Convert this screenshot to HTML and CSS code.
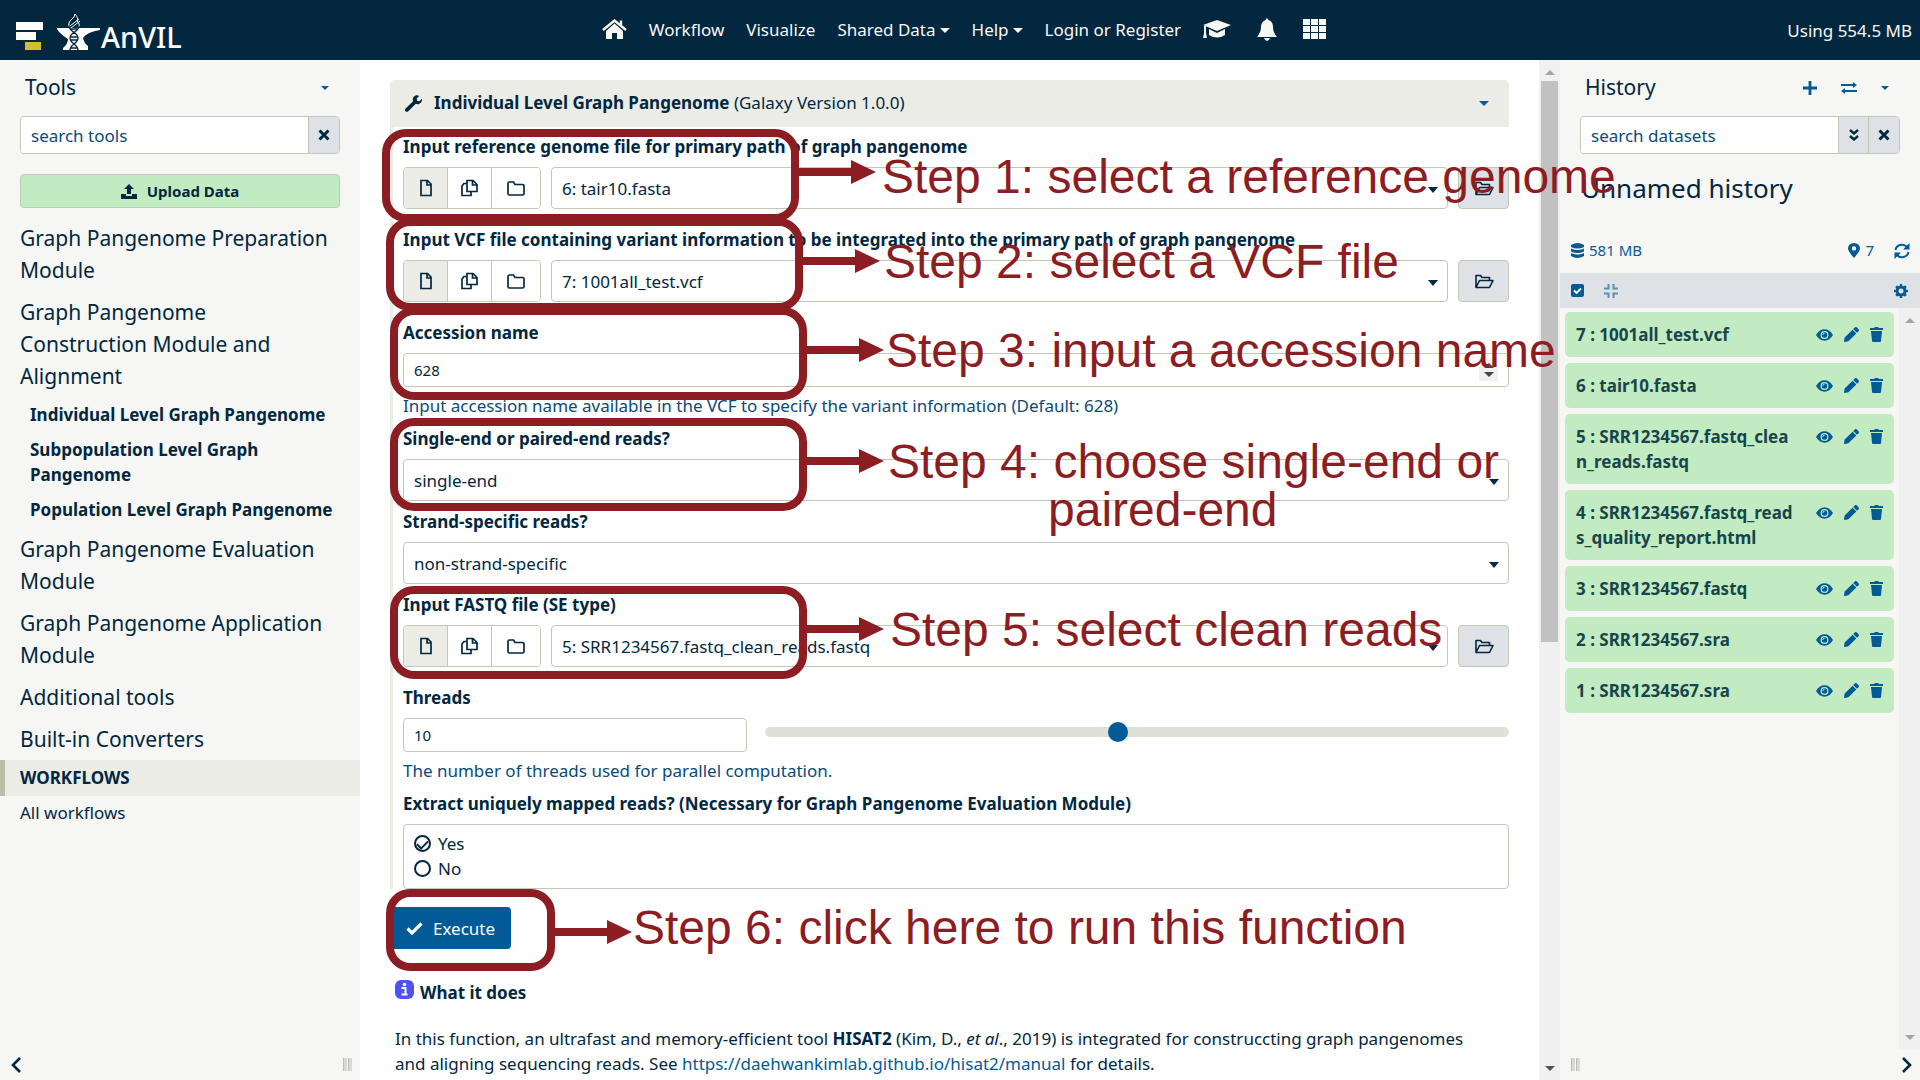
FILE: index.html
```html
<!DOCTYPE html>
<html lang="en">
<head>
<meta charset="utf-8">
<title>Galaxy | AnVIL</title>
<link rel="stylesheet" href="styles.css">
</head>
<body>
<svg class="sprite" aria-hidden="true">
  <symbol id="file" viewBox="0 0 12 18"><path d="M1 1.5h6.500l3.500 3.500v11.500H1zM7 2v4h4" fill="none" stroke="currentColor" stroke-width="1.700"/></symbol>
  <symbol id="copy" viewBox="0 0 17 18"><path d="M6 1.500h6l4 4V12.500H6zM11.500 2v4H16M6 4.500H3L1 7v9.500h9V12.500" fill="none" stroke="currentColor" stroke-width="1.700"/></symbol>
  <symbol id="folder" viewBox="0 0 18 15"><path d="M1 2.500Q1 1 2.500 1h4L8 3.500h7.500Q17 3.500 17 5v7.500Q17 14 15.500 14h-13Q1 14 1 12.500z" fill="none" stroke="currentColor" stroke-width="1.700"/></symbol>
  <symbol id="open" viewBox="0 0 20 15"><path d="M2 13V1.500h4.500L8 3.500h7.500V6M2 13.500L5.500 6.500H19L15.500 13.500H2z" fill="none" stroke="currentColor" stroke-width="1.600" stroke-linejoin="round"/></symbol>
  <symbol id="times" viewBox="0 0 12 12"><path d="M1.500 1.500l9 9M10.500 1.500l-9 9" stroke="currentColor" stroke-width="3"/></symbol>
  <symbol id="eye" viewBox="0 0 18 12"><path fill-rule="evenodd" d="M0 6Q3.500 0 9 0t9 6q-3.500 6-9 6T0 6zM9 1.800a4.200 4.200 0 100 8.400 4.200 4.200 0 000-8.400z" fill="currentColor"/><circle cx="9" cy="6" r="2.900" fill="currentColor"/><path d="M9 4.200A1.800 1.800 0 007.200 6" stroke="#c2ebc1" fill="none"/></symbol>
  <symbol id="pencil" viewBox="0 0 512 512"><path fill="currentColor" d="M497.9 142.1l-46.1 46.1c-4.700 4.700-12.300 4.700-17 0l-111-111c-4.700-4.700-4.700-12.300 0-17l46.100-46.100c18.700-18.700 49.100-18.700 67.900 0l60.100 60.100c18.800 18.700 18.800 49.100 0 67.900zM284.200 99.800L21.600 362.400.4 483.900c-2.900 16.400 11.400 30.600 27.800 27.800l121.500-21.300 262.600-262.600c4.700-4.700 4.700-12.300 0-17l-111-111c-4.800-4.700-12.400-4.700-17.100 0z"/></symbol>
  <symbol id="trash" viewBox="0 0 13 15"><path d="M0 1h4l1-1h3l1 1h4v2H0zM1 4h11l-1 10q0 1-1 1H3q-1 0-1-1z" fill="currentColor"/></symbol>
</svg>

<header class="masthead">
  <a class="brand" href="#" aria-label="AnVIL">
    <svg class="galaxy-mark" viewBox="0 0 27 28"><path d="M0 0h27v8H0zM0 10h20v8H0z" fill="#fff"/><path d="M9 20h16v8H9z" fill="#d2bf2b"/></svg>
    <svg class="anvil-mark" viewBox="0 0 44 36"><path d="M0 14h43v2Q30 18 26 24q1 5 5 8v4H6v-2q5-4 5-9Q3 20 0 15z" fill="#fff"/><g fill="none" stroke="#fff"><path d="M13 14q-3-4 1-8 4-3 4-6 4 5 2 7 4 3 1 7M13 12l9-7M14 14l9-7"/></g><g fill="none" stroke="#02273f" stroke-width="1.300"><path d="M12 12c0 6 9 6 9 12s-8 6-8 12M22 12c0 6-9 6-9 12s8 6 8 12M13 15h8M13 23h8M13 26h8M14 34h7"/></g></svg>
    <span class="brand-name">AnVIL</span>
  </a>
  <nav class="nav">
    <a href="#" aria-label="Home"><svg width="25" height="20" viewBox="0 0 25 20"><path d="M12.500 4.500L21 12v8h-6v-6h-5v6H4v-8z" fill="currentColor"/><path d="M1 11L12.500 1.500 24 11M19 1.500v5" fill="none" stroke="currentColor" stroke-width="2.400"/></svg></a>
    <a href="#">Workflow</a>
    <a href="#">Visualize</a>
    <a href="#" class="drop">Shared Data</a>
    <a href="#" class="drop">Help</a>
    <a href="#">Login or Register</a>
    <a href="#" aria-label="Training"><svg width="28" height="18" viewBox="0 0 28 18"><path d="M14 0l14 5-14 6L0 5zM6 9l8 4 8-4v6q-8 5-16 0zM1 6h2v7l1 5H0l1-5z" fill="currentColor"/></svg></a>
    <a href="#" class="bell" aria-label="Notifications"><svg width="20" height="23" viewBox="0 0 20 23"><path d="M10 0l1.500 2Q16 3.500 16 9t4 10H0Q4 14 4 9t4.500-7zM7 20h6q-1 3-3 3t-3-3z" fill="currentColor"/></svg></a>
    <a href="#" aria-label="Apps"><svg width="23" height="20" viewBox="0 0 23 20"><path d="M0 0h7v6H0zM8 0h7v6H8zM16 0h7v6h-7zM0 7h7v6H0zM8 7h7v6H8zM16 7h7v6h-7zM0 14h7v6H0zM8 14h7v6H8zM16 14h7v6h-7z" fill="currentColor"/></svg></a>
  </nav>
  <span class="quota">Using 554.5 MB</span>
</header>

<div class="workspace">
  <aside class="side tools">
    <div class="side-head"><h2>Tools</h2><button class="plain" aria-label="Tool menu"><span class="caret blue"></span></button></div>
    <div class="search"><input type="text" placeholder="search tools" aria-label="search tools"><button aria-label="Clear"><svg width="12" height="12"><use href="#times"/></svg></button></div>
    <button class="upload"><svg width="16" height="15" viewBox="0 0 16 15"><path d="M8 0l5 5h-3v5H6V5H3zM0 10h5v2h6v-2h5v5H0z" fill="currentColor"/></svg>Upload Data</button>
    <div class="sections">
      <a href="#">Graph Pangenome Preparation Module</a>
      <a href="#">Graph Pangenome Construction Module and Alignment</a>
      <ul>
        <li><a href="#">Individual Level Graph Pangenome</a></li>
        <li><a href="#">Subpopulation Level Graph Pangenome</a></li>
        <li><a href="#">Population Level Graph Pangenome</a></li>
      </ul>
      <a href="#">Graph Pangenome Evaluation Module</a>
      <a href="#">Graph Pangenome Application Module</a>
      <a href="#">Additional tools</a>
      <a href="#">Built-in Converters</a>
    </div>
    <h3 class="flows">WORKFLOWS</h3>
    <a class="all-flows" href="#">All workflows</a>
    <div class="side-foot"><button class="plain" aria-label="Collapse tools"><svg width="10" height="16" viewBox="0 0 10 16"><path d="M9 1L2 8l7 7" fill="none" stroke="currentColor" stroke-width="2.600"/></svg></button><span class="grip"></span></div>
  </aside>

  <main class="center">
    <div class="page">
      <form class="tool">
        <div class="tool-head">
          <svg width="17" height="17" viewBox="0 0 512 512"><path fill="currentColor" d="M508 110l-76 76-68-11-11-68 76-76C375-15 300 5 265 50c-32 38-38 90-22 135L20 410c-27 27-27 60-5 82s60 22 85-3l225-222c60 22 115 5 150-35 40-45 45-90 33-122z"/></svg>
          <h1>Individual Level Graph Pangenome <span>(Galaxy Version 1.0.0)</span></h1>
          <button type="button" class="plain" aria-label="Tool options"><span class="caret blue wide"></span></button>
        </div>
        <div class="fields">
          <div class="field data">
            <label for="ref">Input reference genome file for primary path of graph pangenome</label>
            <div class="row">
              <div class="group"><button type="button" class="on" aria-label="Single dataset"><svg width="12" height="18"><use href="#file"/></svg></button><button type="button" aria-label="Multiple datasets"><svg width="17" height="18"><use href="#copy"/></svg></button><button type="button" aria-label="Collection"><svg width="18" height="15"><use href="#folder"/></svg></button></div>
              <div class="pick"><select id="ref"><option>6: tair10.fasta</option></select></div>
              <button type="button" class="browse" aria-label="Browse"><svg width="20" height="15"><use href="#open"/></svg></button>
            </div>
          </div>
          <div class="field data">
            <label for="vcf">Input VCF file containing variant information to be integrated into the primary path of graph pangenome</label>
            <div class="row">
              <div class="group"><button type="button" class="on" aria-label="Single dataset"><svg width="12" height="18"><use href="#file"/></svg></button><button type="button" aria-label="Multiple datasets"><svg width="17" height="18"><use href="#copy"/></svg></button><button type="button" aria-label="Collection"><svg width="18" height="15"><use href="#folder"/></svg></button></div>
              <div class="pick"><select id="vcf"><option>7: 1001all_test.vcf</option></select></div>
              <button type="button" class="browse" aria-label="Browse"><svg width="20" height="15"><use href="#open"/></svg></button>
            </div>
          </div>
          <div class="field">
            <label for="acc">Accession name</label>
            <div class="number"><input id="acc" type="number" value="628"><span class="spin"><svg width="10" height="14" viewBox="0 0 10 14"><path d="M5 0l5 5H0zM5 14L0 9h10z" fill="#444"/></svg></span></div>
            <p class="help">Input accession name available in the VCF to specify the variant information (Default: 628)</p>
          </div>
          <div class="field choice">
            <label for="ends">Single-end or paired-end reads?</label>
            <div class="pick"><select id="ends"><option>single-end</option></select></div>
          </div>
          <div class="field choice">
            <label for="strand">Strand-specific reads?</label>
            <div class="pick"><select id="strand"><option>non-strand-specific</option></select></div>
          </div>
          <div class="field data">
            <label for="fastq">Input FASTQ file (SE type)</label>
            <div class="row">
              <div class="group"><button type="button" class="on" aria-label="Single dataset"><svg width="12" height="18"><use href="#file"/></svg></button><button type="button" aria-label="Multiple datasets"><svg width="17" height="18"><use href="#copy"/></svg></button><button type="button" aria-label="Collection"><svg width="18" height="15"><use href="#folder"/></svg></button></div>
              <div class="pick"><select id="fastq"><option>5: SRR1234567.fastq_clean_reads.fastq</option></select></div>
              <button type="button" class="browse" aria-label="Browse"><svg width="20" height="15"><use href="#open"/></svg></button>
            </div>
          </div>
          <div class="field">
            <label for="threads">Threads</label>
            <div class="threads"><input id="threads" type="number" value="10"><input type="range" min="1" max="20" value="10" aria-label="Threads"></div>
            <p class="help">The number of threads used for parallel computation.</p>
          </div>
          <fieldset class="field">
            <legend>Extract uniquely mapped reads? (Necessary for Graph Pangenome Evaluation Module)</legend>
            <div class="radios">
              <label><input type="radio" name="uniq" checked>Yes</label>
              <label><input type="radio" name="uniq">No</label>
            </div>
          </fieldset>
        </div>
      </form>
      <button class="execute"><svg width="17" height="13" viewBox="0 0 17 13"><path d="M1.500 6.500L6 11l9.500-9.500" fill="none" stroke="currentColor" stroke-width="3.200"/></svg>Execute</button>
      <section class="about">
        <h2><svg width="19" height="19" viewBox="0 0 19 19"><rect width="19" height="19" rx="6" fill="#5050ff"/><circle cx="9.500" cy="4.500" r="1.800" fill="#fff"/><path d="M6.500 8h4v6M6.500 14.500h6" fill="none" stroke="#fff" stroke-width="2"/></svg>What it does</h2>
        <p>In this function, an ultrafast and memory-efficient tool <b>HISAT2</b> (Kim, D., <i>et al</i>., 2019) is integrated for construccting graph pangenomes and aligning sequencing reads. See <a href="#">https://daehwankimlab.github.io/hisat2/manual</a> for details.</p>
      </section>
    </div>
    <div class="bar"><span class="up"></span><span class="thumb"></span><span class="down dark"></span></div>

    <div class="guide">
      <div class="mark m1"></div><div class="mark m2"></div><div class="mark m3"></div><div class="mark m4"></div><div class="mark m5"></div><div class="mark m6"></div>
      <p class="s1">Step 1: select a reference genome</p>
      <p class="s2">Step 2: select a VCF file</p>
      <p class="s3">Step 3: input a accession name</p>
      <p class="s4">Step 4: choose single-end or<span>paired-end</span></p>
      <p class="s5">Step 5: select clean reads</p>
      <p class="s6">Step 6: click here to run this function</p>
    </div>
  </main>

  <aside class="side history">
    <div class="side-head">
      <h2>History</h2>
      <button class="plain" aria-label="New history"><svg width="14" height="14" viewBox="0 0 14 14"><path d="M7 0v14M0 7h14" stroke="currentColor" stroke-width="2.800"/></svg></button>
      <button class="plain" aria-label="Switch history"><svg width="16" height="12" viewBox="0 0 16 12"><path d="M0 3h13M3 9h13" stroke="currentColor" stroke-width="2"/><path d="M12 0l4 3-4 3zM4 6L0 9l4 3z" fill="currentColor"/></svg></button>
      <button class="plain" aria-label="History menu"><span class="caret blue"></span></button>
    </div>
    <div class="search"><input type="text" placeholder="search datasets" aria-label="search datasets"><button class="slim" aria-label="Advanced"><svg width="10" height="12" viewBox="0 0 10 12"><path d="M1 1l4 3.500L9 1M1 7l4 3.500L9 7" fill="none" stroke="currentColor" stroke-width="2.400"/></svg></button><button aria-label="Clear"><svg width="12" height="12"><use href="#times"/></svg></button></div>
    <h2 class="hist-name">Unnamed history</h2>
    <div class="stats">
      <svg width="13" height="15" viewBox="0 0 13 15"><path d="M0 2q6.500-4 13 0v2q-6.500 3-13 0zM0 5.500q6.500 3 13 0v3q-6.500 3-13 0zM0 10q6.500 3 13 0v3q-6.500 4-13 0z" fill="currentColor"/></svg>
      <span class="size">581 MB</span>
      <svg width="12" height="15" viewBox="0 0 12 15"><path fill-rule="evenodd" d="M6 15Q0 8 0 5.500a6 5.500 0 0112 0Q12 8 6 15zM6 3.200a2.200 2.200 0 100 4.400 2.200 2.200 0 000-4.400z" fill="currentColor"/></svg>
      <span class="count">7</span>
      <svg width="16" height="16" viewBox="0 0 16 16"><path d="M1.500 7A6.500 6 0 0113 4M14.500 9A6.500 6 0 013 12" fill="none" stroke="currentColor" stroke-width="2"/><path d="M15.500 0v6.500H9zM.5 16V9.500H7z" fill="currentColor"/></svg>
    </div>
    <div class="ops">
      <svg width="13" height="13" viewBox="0 0 13 13"><rect width="13" height="13" rx="2" fill="currentColor"/><path d="M3 6.500l2.500 2.500L10 4.500" fill="none" stroke="#fff" stroke-width="1.800"/></svg>
      <svg class="faded" width="14" height="14" viewBox="0 0 14 14"><path d="M0 4.500h4.500V0M9.500 0v4.500H14M0 9.500h4.500V14M9.500 14V9.500H14" fill="none" stroke="currentColor" stroke-width="2"/></svg>
      <svg class="last" width="14" height="14" viewBox="0 0 14 14"><circle cx="7" cy="7" r="4" fill="none" stroke="currentColor" stroke-width="3"/><circle cx="7" cy="7" r="6" fill="none" stroke="currentColor" stroke-width="2" pathLength="32" stroke-dasharray="2 2" stroke-dashoffset="1"/></svg>
    </div>
    <div class="list-wrap">
      <ul class="datasets">
        <li><a href="#">7 : 1001all_test.vcf</a><span class="acts"><svg width="17" height="12"><use href="#eye"/></svg><svg width="15" height="15"><use href="#pencil"/></svg><svg width="13" height="15"><use href="#trash"/></svg></span></li>
        <li><a href="#">6 : tair10.fasta</a><span class="acts"><svg width="17" height="12"><use href="#eye"/></svg><svg width="15" height="15"><use href="#pencil"/></svg><svg width="13" height="15"><use href="#trash"/></svg></span></li>
        <li><a href="#">5 : SRR1234567.fastq_clean_reads.fastq</a><span class="acts"><svg width="17" height="12"><use href="#eye"/></svg><svg width="15" height="15"><use href="#pencil"/></svg><svg width="13" height="15"><use href="#trash"/></svg></span></li>
        <li><a href="#">4 : SRR1234567.fastq_reads_quality_report.html</a><span class="acts"><svg width="17" height="12"><use href="#eye"/></svg><svg width="15" height="15"><use href="#pencil"/></svg><svg width="13" height="15"><use href="#trash"/></svg></span></li>
        <li><a href="#">3 : SRR1234567.fastq</a><span class="acts"><svg width="17" height="12"><use href="#eye"/></svg><svg width="15" height="15"><use href="#pencil"/></svg><svg width="13" height="15"><use href="#trash"/></svg></span></li>
        <li><a href="#">2 : SRR1234567.sra</a><span class="acts"><svg width="17" height="12"><use href="#eye"/></svg><svg width="15" height="15"><use href="#pencil"/></svg><svg width="13" height="15"><use href="#trash"/></svg></span></li>
        <li><a href="#">1 : SRR1234567.sra</a><span class="acts"><svg width="17" height="12"><use href="#eye"/></svg><svg width="15" height="15"><use href="#pencil"/></svg><svg width="13" height="15"><use href="#trash"/></svg></span></li>
      </ul>
      <div class="bar"><span class="up"></span><span class="down"></span></div>
    </div>
    <div class="side-foot"><span class="grip"></span><button class="plain" aria-label="Collapse history"><svg width="10" height="16" viewBox="0 0 10 16"><path d="M1 1l7 7-7 7" fill="none" stroke="currentColor" stroke-width="2.600"/></svg></button></div>
  </aside>
</div>
</body>
</html>
```

FILE: styles.css
```css
:root {
  --ink: #02273f;
  --blue: #025b96;
  --line: #c3c8b5;
  --panel: #f6f7f4;
  --soft: #ebece6;
  --grey: #dee2e6;
  --green: #c2ebc1;
  --red: #8c1d23;
}
* { box-sizing: border-box; }
body {
  margin: 0;
  min-height: 100vh;
  display: flex;
  flex-direction: column;
  overflow-x: hidden;
  background: #fff;
  color: var(--ink);
  font: 17px/25px "Noto Sans", "Open Sans", sans-serif;
}
h1, h2, h3, p, ul, fieldset { margin: 0; padding: 0; border: 0; }
ul { list-style: none; }
a { color: inherit; text-decoration: none; }
button, input, select { font: inherit; color: inherit; }
button { display: flex; align-items: center; justify-content: center; padding: 0; }
svg { flex: none; display: block; }
.sprite { position: absolute; width: 0; height: 0; }
.plain { border: 0; background: none; }

.caret { width: 0; border: 4px solid transparent; border-top-color: currentColor; border-bottom: 0; }
.caret.wide { border-width: 5px 5px 0; }
.blue { color: var(--blue); }

/* Masthead */
.masthead {
  display: grid;
  grid-template-columns: 1fr auto 1fr;
  align-items: center;
  height: 60px;
  padding: 0 8px 0 16px;
  background: var(--ink);
  color: #f8f8f5;
}
.brand { display: flex; align-items: flex-end; padding-top: 4px; }
.galaxy-mark { width: 27px; height: 28px; margin-right: 14px; }
.anvil-mark { width: 44px; height: 36px; }
.brand-name { font: 500 29px/26px "Noto Sans", sans-serif; color: #fff; }
.nav { display: flex; align-items: center; gap: 22px; padding-bottom: 2px; }
.drop::after { content: ""; display: inline-block; margin-left: 4px; vertical-align: 3px; border: 5px solid transparent; border-top-color: currentColor; border-bottom: 0; }
.bell { padding: 0 4px; }
.quota { justify-self: end; }

.workspace { flex: 1; display: flex; align-items: stretch; }

/* Side panels */
.side { flex: none; width: 360px; display: flex; flex-direction: column; background: var(--panel); }
.side-head { display: flex; align-items: center; height: 56px; padding: 0 31px 0 25px; color: var(--blue); }
.side-head h2 { flex: 1; padding-bottom: 2px; font-size: 21px; font-weight: 400; color: var(--ink); }
.search { display: flex; height: 38px; margin: 0 20px; border: 1px solid var(--line); border-radius: 4px; overflow: hidden; }
.search input { flex: 1; min-width: 0; border: 0; padding: 0 10px; background: #fff; outline: 0; }
.search input::placeholder { color: #0a4a78; opacity: 1; }
.search button { width: 31px; border: 0; border-left: 1px solid var(--line); background: var(--grey); }
.search button.slim { width: 30px; }
.upload { height: 34px; margin: 20px 20px 9px; gap: 10px; border: 1px solid #bccab3; border-radius: 4px; background: var(--green); font-size: 15px; font-weight: 700; }
.sections > a { display: block; padding: 5px 26px 5px 20px; font-size: 21px; line-height: 32px; }
.sections ul { padding: 0 20px 1px 30px; font-weight: 700; }
.sections li { padding: 5px 0; }
.flows { padding: 5px 15px; border-left: 5px solid #b9bea9; background: var(--soft); font-size: 17px; line-height: 26px; }
.all-flows { padding: 4px 20px; }
.side-foot { display: flex; justify-content: space-between; align-items: center; height: 31px; margin-top: auto; padding: 0 8px 0 11px; }
.grip { width: 9px; height: 13px; background: repeating-linear-gradient(90deg, #bbb 0 1px, #d8d8d8 1px 4px, #f6f7f4 4px 5px); }

/* Tool form */
.center { position: relative; flex: 1; min-width: 0; display: flex; }
.page { flex: 1; min-width: 0; padding: 20px 30px 0; }
.tool-head { display: flex; align-items: center; height: 47px; padding: 0 20px 0 15px; background: var(--soft); border-radius: 5px 5px 0 0; }
.tool-head h1 { flex: 1; margin-left: 12px; padding-bottom: 2px; font-size: 17px; font-weight: 700; }
.tool-head h1 span { font-weight: 400; }
.fields { display: flex; flex-direction: column; gap: 7px; padding: 7px 0 0 10px; border-left: 3px solid var(--soft); }
.field > label, legend { display: block; margin-bottom: 8px; padding: 0; font-weight: 700; }
.field.data { margin-bottom: 11px; }
.field.choice { margin-bottom: 1px; }
.row { display: flex; gap: 10px; }
.group { display: flex; border: 1px solid var(--line); border-radius: 4px; overflow: hidden; }
.group button { width: 44px; border: 0; border-right: 1px solid var(--line); background: #fff; }
.group button:last-child { width: 48px; border-right: 0; }
.group button.on { background: var(--soft); }
.pick { position: relative; flex: 1; height: 42px; }
.pick select { width: 100%; height: 100%; padding: 0 10px; border: 1px solid var(--line); border-radius: 4px; background: #fff; appearance: none; }
.pick::after { content: ""; position: absolute; right: 10px; top: 20px; border: 5px solid transparent; border-top: 6px solid var(--ink); border-bottom: 0; }
.browse { width: 51px; border: 1px solid var(--line); border-radius: 4px; background: var(--grey); }
input[type="number"] { width: 100%; height: 34px; padding: 0 10px; border: 1px solid var(--line); border-radius: 4px; background: #fff; font-size: 15px; appearance: textfield; }
input[type="number"]::-webkit-inner-spin-button { display: none; }
.number { position: relative; }
.spin { position: absolute; right: 11px; top: 6px; display: flex; justify-content: center; align-items: center; width: 19px; height: 22px; background: #f0f0f0; }
.help { margin: 6px 0 1px; color: #0a4a78; }
.threads { display: grid; grid-template-columns: 344px 1fr; gap: 18px; }
input[type="range"] { width: 100%; height: 28px; margin: 0; background: none; appearance: none; }
input[type="range"]::-webkit-slider-runnable-track { height: 10px; border-radius: 5px; background: #dfe1d7; }
input[type="range"]::-webkit-slider-thumb { width: 20px; height: 20px; margin-top: -5px; border-radius: 50%; background: var(--blue); appearance: none; }
.radios { padding: 6px 10px 7px; border: 1px solid var(--line); border-radius: 4px; }
.radios label { display: flex; align-items: center; gap: 7px; }
input[type="radio"] { display: grid; place-items: center; width: 17px; height: 17px; margin: 0; border: 2px solid var(--ink); border-radius: 50%; appearance: none; }
input[type="radio"]:checked::before { content: ""; width: 9px; height: 5px; border: solid var(--ink); border-width: 0 0 2px 2px; transform: rotate(-45deg); }
.execute { margin-top: 18px; width: 121px; height: 42px; gap: 10px; border: 0; border-radius: 4px; background: var(--blue); color: #fff; }
.about { padding: 31px 14px 0 5px; }
.about h2 { display: flex; gap: 6px; font-size: 17px; line-height: 25px; }
.about p { margin-top: 21px; }
.about a { color: var(--blue); }

/* Scroll tracks */
.bar { flex: none; display: flex; flex-direction: column; align-items: center; width: 21px; padding: 10px 0 9px; background: #f0f0f0; }
.up { border: 5px solid transparent; border-top: 0; border-bottom-color: #a3a3a3; }
.down { margin-top: auto; border: 5px solid transparent; border-bottom: 0; border-top-color: #a3a3a3; }
.down.dark { border-top-color: #505050; }
.thumb { width: 17px; height: 56%; margin-top: 6px; background: #c1c1c1; }

/* Step annotations drawn over the page */
.guide { position: absolute; inset: 0; z-index: 2; color: var(--red); font: 48px/48px "Liberation Sans", Arial, sans-serif; pointer-events: none; }
.mark { position: absolute; width: 417px; height: 93px; border: 8px solid var(--red); border-radius: 24px; }
.mark::before { content: ""; position: absolute; left: 100%; top: 31px; width: 60px; height: 8px; background: var(--red); }
.mark::after { content: ""; position: absolute; left: calc(100% + 60px); top: 23px; border: 12px solid transparent; border-left: 25px solid var(--red); border-right: 0; }
.m1 { left: 22px; top: 69px; }
.m2 { left: 26px; top: 158px; }
.m3 { left: 30px; top: 247px; }
.m4 { left: 30px; top: 358px; }
.m5 { left: 30px; top: 526px; }
.m6 { left: 26px; top: 829px; width: 169px; height: 82px; }
.guide p { position: absolute; white-space: nowrap; }
.guide span { display: block; padding-left: 160px; }
.s1 { left: 522px; top: 93px; }
.s2 { left: 524px; top: 178px; }
.s3 { left: 526px; top: 267px; }
.s4 { left: 528px; top: 378px; }
.s5 { left: 530px; top: 546px; }
.s6 { left: 273px; top: 844px; }

/* History */
.history .side-head { gap: 24px; }
.hist-name { margin: 18px 21px 0; font-size: 26px; font-weight: 400; line-height: 32px; }
.stats, .ops { display: flex; align-items: center; color: var(--blue); font-size: 15px; }
.stats { height: 45px; margin-top: 24px; padding: 0 10px 0 11px; }
.stats .size { flex: 1; margin-left: 5px; }
.stats .count { margin: 0 20px 0 5px; }
.ops { height: 35px; padding: 0 12px 0 11px; gap: 20px; background: var(--grey); }
.ops .faded { opacity: .6; }
.ops .last { margin-left: auto; }
.list-wrap { flex: 1; display: flex; }
.datasets { flex: 1; display: flex; flex-direction: column; gap: 6px; padding: 4px 5px; }
.datasets li { display: flex; justify-content: space-between; padding: 10px 11px; border-radius: 5px; background: var(--green); color: #16454d; font-weight: 700; }
.datasets a { width: 218px; word-break: break-all; }
.acts { display: flex; align-items: center; gap: 11px; height: 25px; color: var(--blue); }
```
